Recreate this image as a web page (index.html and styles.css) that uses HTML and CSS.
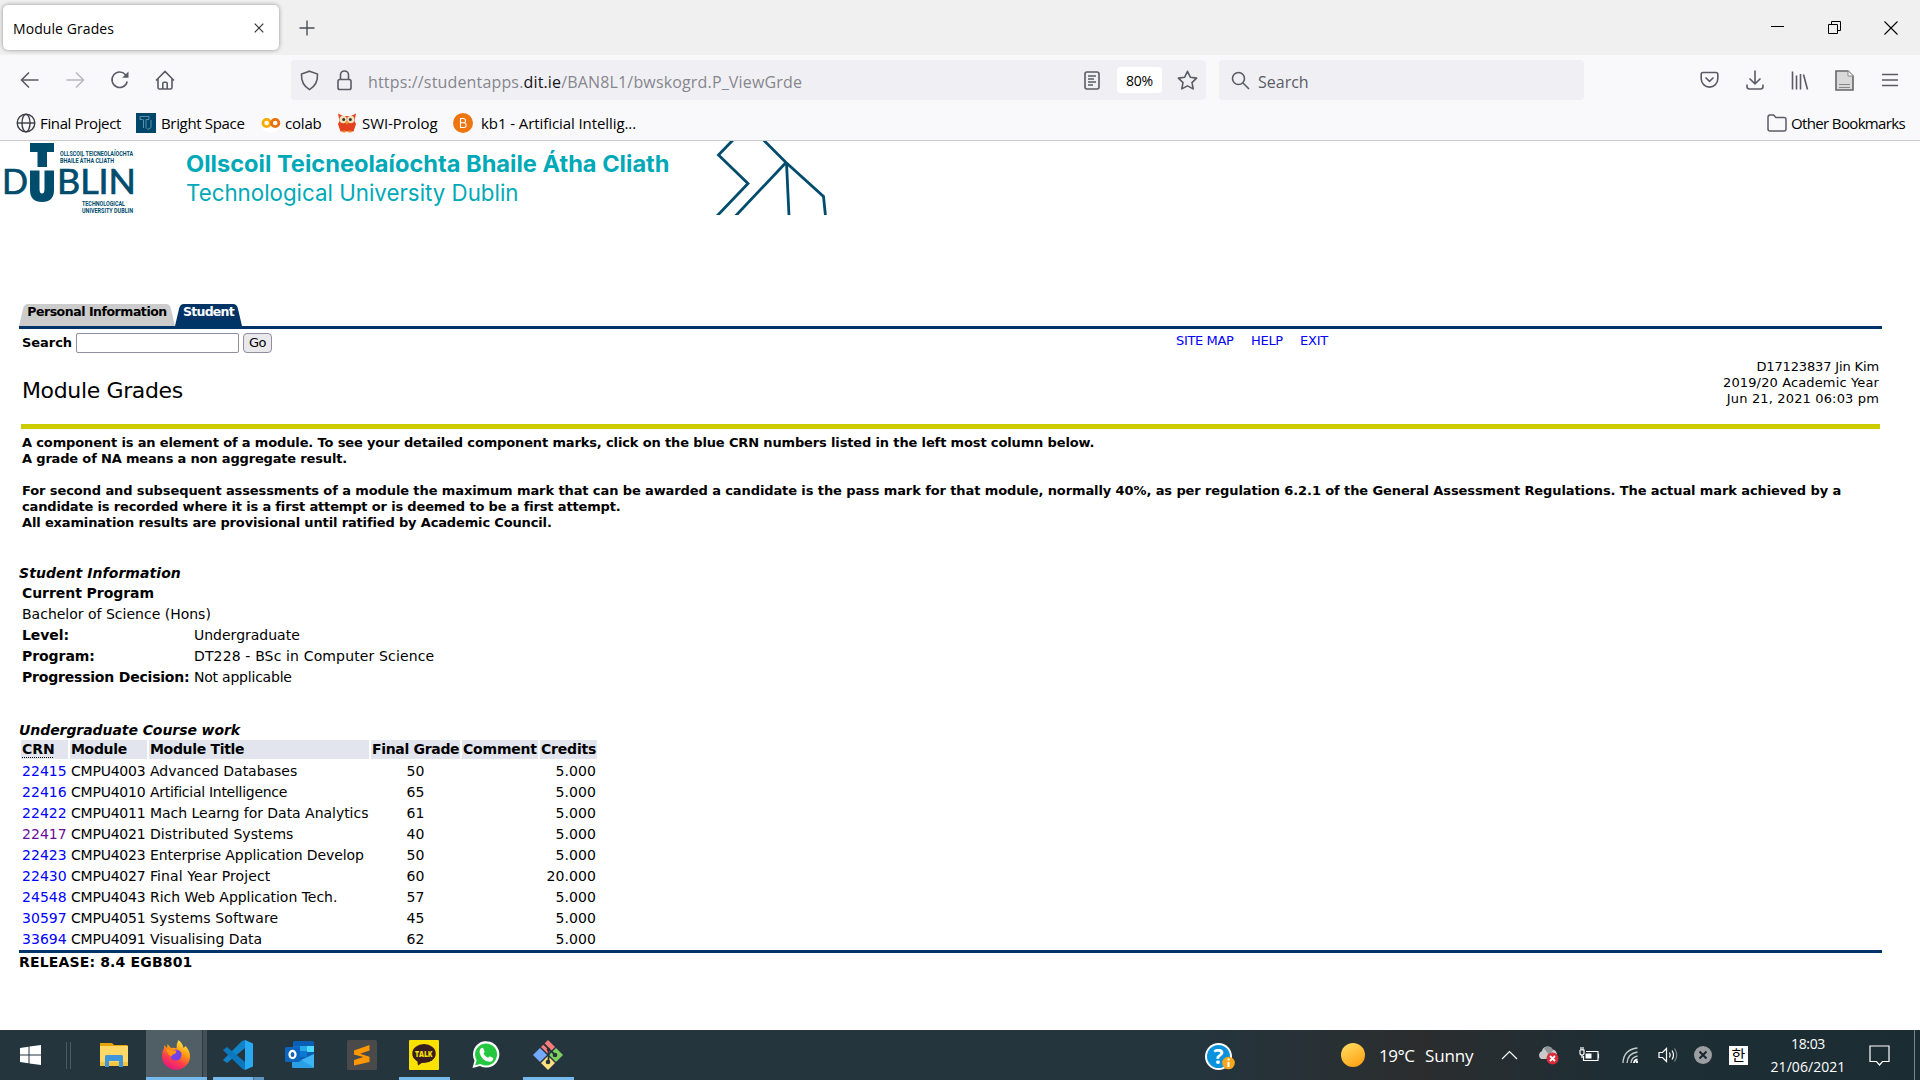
FILE: index.html
```html
<!DOCTYPE html>
<html lang="en">
<head>
<meta charset="utf-8">
<title>Module Grades</title>
<link rel="stylesheet" href="styles.css">
</head>
<body>
<div class="screen">
  <header class="tabstrip">
    <div class="browser-tab"><span class="t-tab">Module Grades</span>
      <svg width="10" height="10" viewBox="0 0 10 10" fill="none" stroke="#333" stroke-width="1.2"><path d="M.7.7l8.6 8.6M9.3.7L.7 9.3"/></svg>
    </div>
    <svg class="new-tab" width="16" height="16" viewBox="0 0 16 16" fill="none" stroke="#4b4b55" stroke-width="1.4"><path d="M8 .5v15M.5 8h15"/></svg>
    <div class="window-buttons">
      <span><svg width="13" height="13" viewBox="0 0 13 13"><path d="M0 5.5h13" stroke="#000"/></svg></span>
      <span><svg width="13" height="13" viewBox="0 0 13 13" fill="none" stroke="#000"><path d="M.5 3.5h9v9h-9zM3.5 3.5v-3h9v9h-3"/></svg></span>
      <span><svg width="14" height="14" viewBox="0 0 14 14" fill="none" stroke="#000" stroke-width="1.1"><path d="M.5.5l13 13M13.500.5l-13 13"/></svg></span>
    </div>
  </header>

  <nav class="toolbar">
    <div class="nav-buttons">
      <span><svg width="20" height="20" viewBox="0 0 20 20"><path d="M18.500 10H2M9 2.500L1.500 10 9 17.500"/></svg></span>
      <span class="off"><svg width="20" height="20" viewBox="0 0 20 20"><path d="M1.500 10H18M11 2.500l7.500 7.500-7.500 7.500"/></svg></span>
      <span><svg width="20" height="20" viewBox="0 0 20 20"><path d="M17.200 11.500A7.700 7.700 0 1 1 15.500 4.700L17 6.200"/><path d="M18.500 1.500v6.300h-6.300z" fill="#5b5b66" stroke="none"/></svg></span>
      <span><svg width="20" height="20" viewBox="0 0 20 20"><path d="M1 10.500L10 1.500l9 9M3 9v8.500q0 1.500 1.500 1.500h11q1.500 0 1.500-1.500V9M7.800 18.500v-5q0-1.300 1.200-1.300h2q1.200 0 1.200 1.300v5"/></svg></span>
    </div>
    <div class="url-bar">
      <svg width="19" height="21" viewBox="0 0 19 21"><path d="M9.500 1.200L17.500 4q.6 10.500-8 15.600Q.9 14.500 1.500 4z"/></svg>
      <svg class="lock" width="15" height="21" viewBox="0 0 15 21"><rect x="1" y="9.500" width="13" height="10" rx="1.800"/><path d="M3.500 9.500V5a4 4 0 0 1 8 0v4.500"/></svg>
      <span class="url t-url">https://studentapps.<b>dit.ie</b>/BAN8L1/bwskogrd.P_ViewGrde</span>
      <svg width="16" height="19" viewBox="0 0 16 19"><rect x="1" y="1" width="14" height="17" rx="2"/><path d="M4 5h8M4 8h6M4 11h8M4 14h5" stroke-width="1.300"/></svg>
      <span class="zoom-level">80%</span>
      <svg width="21" height="20" viewBox="0 0 21 20"><path d="M10.500 1.300l2.800 5.900 6.300.9-4.600 4.500 1.200 6.300-5.700-3-5.700 3L6 12.600 1.400 8.100l6.300-.9z" stroke-linejoin="round"/></svg>
    </div>
    <div class="search-bar">
      <svg width="19" height="19" viewBox="0 0 19 19"><circle cx="7.500" cy="7.500" r="6"/><path d="M12 12l6 6"/></svg>
      <span class="t-search">Search</span>
    </div>
    <div class="tool-buttons">
      <span><svg width="19" height="18" viewBox="0 0 19 18"><path d="M3 1.500h13q1.800 0 1.800 1.800v4.500a8.300 8.300 0 0 1-16.600 0V3.300Q1.200 1.500 3 1.500zM5.500 6.500l4 3.800 4-3.800"/></svg></span>
      <span><svg width="18" height="20" viewBox="0 0 18 20"><path d="M9 .5v13M3.500 8.500L9 13.800l5.500-5.300M1 14.500v2q0 2.500 2.500 2.500h11q2.500 0 2.500-2.500v-2"/></svg></span>
      <span><svg width="18" height="19" viewBox="0 0 18 19"><path d="M1.500.5v18M5.500 4.500v14M9.500 3v15.500M12.500 3.500l4 15"/></svg></span>
      <span><svg width="19" height="21" viewBox="0 0 19 21"><path d="M1 1h12l5 5v14H1z" fill="#d9d9d9" stroke="#666"/><path d="M13 1v5h5" fill="#fff" stroke="#888" stroke-width="1"/><path d="M4 14.500h11M4 17.500h11" stroke="#888" stroke-width="1.200"/></svg></span>
      <span><svg width="16" height="14" viewBox="0 0 16 14"><path d="M0 1.500h16M0 7h16M0 12.500h16"/></svg></span>
    </div>
  </nav>

  <nav class="bookmarks">
    <svg width="20" height="20" viewBox="0 0 20 20" fill="none" stroke="#3c3c44" stroke-width="1.400"><circle cx="10" cy="10" r="8.800"/><ellipse cx="10" cy="10" rx="4" ry="8.800"/><path d="M1.200 10h17.600"/></svg>
    <span class="bm-final">Final Project</span>
    <svg width="20" height="20" viewBox="0 0 20 20"><path fill="#00466b" d="M0 0h20v20H0z"/><path d="M4 3.500h9v3h-3v8l2 2 3-2V7M6.500 6.500H4v-3M7.500 6.500V15" fill="none" stroke="#5b91a8"/></svg>
    <span class="bm-bright">Bright Space</span>
    <svg width="20" height="20" viewBox="0 0 20 20"><circle cx="10" cy="10" r="10" fill="#fff"/><g fill="none" stroke-width="2.800"><circle cx="5.600" cy="10" r="3.700" stroke="#f9ab00"/><circle cx="14.200" cy="10" r="3.700" stroke="#e8710a"/></g></svg>
    <span class="bm-colab">colab</span>
    <svg width="20" height="20" viewBox="0 0 20 20"><path d="M1 .5l5 2.500h8L19 .5 17.500 8l1.500 3-2.500 7.500h-13L1 11l1.500-3z" fill="#e2401f"/><circle cx="6.200" cy="6.500" r="3.700" fill="#f3dfb8"/><circle cx="13.800" cy="6.500" r="3.700" fill="#f3dfb8"/><circle cx="6.700" cy="6.500" r="1.500" fill="#333"/><circle cx="13.300" cy="6.500" r="1.500" fill="#333"/><path d="M8.500 8.500h3L10 12z" fill="#f9a01b"/><path d="M5.500 17.500h3v2h-3zm6 0h3v2h-3z" fill="#e88a1a"/></svg>
    <span class="bm-swi">SWI-Prolog</span>
    <svg width="20" height="20" viewBox="0 0 20 20"><circle cx="10" cy="10" r="10" fill="#ee7611"/><path d="M7.500 5.500h3.300a2.200 2.200 0 0 1 0 4.300H7.500zM7.500 9.800h3.800a2.400 2.400 0 0 1 0 4.700H7.500z" fill="none" stroke="#fff" stroke-width="1.100"/></svg>
    <span class="bm-kb">kb1 - Artificial Intellig...</span>
    <svg class="folder" width="20" height="18" viewBox="0 0 20 18" fill="none" stroke="#5b5b66" stroke-width="1.500"><path d="M1 3.300Q1 1 3 1h3.500L9 3.500h8q2 0 2 2v9.500q0 2-2 2H3q-2 0-2-2z"/></svg>
    <span class="bm-other">Other Bookmarks</span>
  </nav>

  <main class="page">
    <div class="banner">
      <svg width="840" height="74" viewBox="0 0 840 74">
        <g fill="#004c6d" font-family="Lato, sans-serif">
          <path d="M30 2h24v9h-7v15h-9.500V11H30z"/>
          <g font-size="34" stroke="#004c6d" stroke-width=".7">
            <text x="2" y="52.500" textLength="26" lengthAdjust="spacingAndGlyphs">D</text>
            <text x="57" y="52.500" textLength="79" lengthAdjust="spacingAndGlyphs">BLIN</text>
          </g>
          <path d="M30 29.500h9.500V48q0 4.500 2.500 4.500T44.500 48V29.500H54V49q0 12-12 12T30 49z"/>
          <g font-size="7" font-family="Roboto, sans-serif" font-weight="700">
            <text x="60" y="14.500" textLength="73" lengthAdjust="spacingAndGlyphs">OLLSCOIL TEICNEOLAÍOCHTA</text>
            <text x="60" y="22" textLength="54" lengthAdjust="spacingAndGlyphs">BHAILE ÁTHA CLIATH</text>
            <text x="82" y="65" textLength="43" lengthAdjust="spacingAndGlyphs">TECHNOLOGICAL</text>
            <text x="82" y="72" textLength="51" lengthAdjust="spacingAndGlyphs">UNIVERSITY DUBLIN</text>
          </g>
        </g>
        <g fill="#00a9b7">
          <text x="186" y="31" font-size="23" font-weight="700" font-family="Inter, sans-serif" textLength="483.500" lengthAdjust="spacingAndGlyphs">Ollscoil Teicneolaíochta Bhaile Átha Cliath</text>
          <text x="186" y="60" font-size="22.500" font-family="Inter, sans-serif" textLength="332.500" lengthAdjust="spacingAndGlyphs">Technological University Dublin</text>
        </g>
        <path d="M733-1L718.500 14 748 42.500 717 75M763.500-1L786 21.500 823.500 55.500 825.500 75M786 21.500L735.500 75M786.500 21.500L789 75" fill="none" stroke="#004c6d" stroke-width="2.800"/>
      </svg>
    </div>

    <div class="page-tabs">
      <a class="page-tab personal"><span>Personal Information</span></a>
      <a class="page-tab student"><span>Student</span></a>
    </div>
    <div class="search-row">
      <b>Search</b>
      <input type="text">
      <button>Go</button>
      <div class="links"><a class="sitemap">SITE MAP</a><a class="help">HELP</a><a class="exit">EXIT</a></div>
    </div>
    <div class="title-row">
      <h1>Module Grades</h1>
      <div class="student-stamp">
        <span class="st-a">D17123837 Jin Kim</span>
        <span class="st-b">2019/20 Academic Year</span>
        <span class="st-c">Jun 21, 2021 06:03 pm</span>
      </div>
    </div>
    <div class="notice">
      <p class="n-first">A component is an element of a module. To see your detailed component marks, click on the blue CRN numbers listed in the left most column below.</p>
      <p class="n-grade">A grade of NA means a non aggregate result.</p>
      <p class="n-wide">For second and subsequent assessments of a module the maximum mark that can be awarded a candidate is the pass mark for that module, normally 40%, as per regulation 6.2.1 of the General Assessment Regulations. The actual mark achieved by a</p>
      <p class="n-cand">candidate is recorded where it is a first attempt or is deemed to be a first attempt.</p>
      <p>All examination results are provisional until ratified by Academic Council.</p>
    </div>

    <h2>Student Information</h2>
    <div class="info">
      <b>Current Program</b>
      <span class="full">Bachelor of Science (Hons)</span>
      <b>Level:</b><span>Undergraduate</span>
      <b>Program:</b><span class="i-prog">DT228 - BSc in Computer Science</span>
      <b class="i-dec">Progression Decision:</b><span class="i-na">Not applicable</span>
    </div>

    <h2 class="course">Undergraduate Course work</h2>
    <table>
      <colgroup><col class="c1"><col class="c2"><col class="c3"><col class="c4"><col class="c5"><col class="c6"></colgroup>
      <thead><tr><th><abbr>CRN</abbr></th><th>Module</th><th>Module Title</th><th>Final Grade</th><th class="th-com">Comment</th><th class="th-com">Credits</th></tr></thead>
      <tbody>
        <tr><td><a>22415</a></td><td>CMPU4003</td><td>Advanced Databases</td><td>50</td><td></td><td>5.000</td></tr>
        <tr><td><a>22416</a></td><td>CMPU4010</td><td class="tight">Artificial Intelligence</td><td>65</td><td></td><td>5.000</td></tr>
        <tr><td><a>22422</a></td><td>CMPU4011</td><td>Mach Learng for Data Analytics</td><td>61</td><td></td><td>5.000</td></tr>
        <tr><td><a class="visited">22417</a></td><td>CMPU4021</td><td class="loose">Distributed Systems</td><td>40</td><td></td><td>5.000</td></tr>
        <tr><td><a>22423</a></td><td>CMPU4023</td><td class="snug">Enterprise Application Develop</td><td>50</td><td></td><td>5.000</td></tr>
        <tr><td><a>22430</a></td><td>CMPU4027</td><td class="loose">Final Year Project</td><td>60</td><td></td><td>20.000</td></tr>
        <tr><td><a>24548</a></td><td>CMPU4043</td><td>Rich Web Application Tech.</td><td>57</td><td></td><td>5.000</td></tr>
        <tr><td><a>30597</a></td><td>CMPU4051</td><td class="looser">Systems Software</td><td>45</td><td></td><td>5.000</td></tr>
        <tr><td><a>33694</a></td><td>CMPU4091</td><td>Visualising Data</td><td>62</td><td></td><td>5.000</td></tr>
      </tbody>
    </table>
    <div class="release">RELEASE: 8.4 EGB801</div>
  </main>

  <footer class="taskbar">
    <div class="start"><svg width="21" height="20" viewBox="0 0 21 20" fill="#fff"><path d="M0 3l8.500-1.200v7.700H0zM9.500 1.600L21 0v9.500H9.500zM0 10.500h8.500v7.700L0 17zM9.500 10.500H21V20L9.500 18.400z"/></svg></div>
    <div class="grip"></div>
    <div class="apps">
      <span><svg width="30" height="30" viewBox="0 0 30 30"><path d="M1 3h12l2 2h13.500v2H1z" fill="#e5a50a"/><rect x="1" y="6" width="28" height="20" fill="#ffd868"/><path d="M1 22h28v4H1z" fill="#f5c342"/><path d="M6 27V16.500Q6 15 7.500 15h15q1.500 0 1.500 1.500V27h-4v-6H10v6z" fill="#3d96dc"/></svg></span>
      <span class="active"><svg width="30" height="30" viewBox="0 0 30 30"><defs><linearGradient id="fx" x1=".8" y1="0" x2=".3" y2="1"><stop offset="0" stop-color="#fff44f"/><stop offset=".4" stop-color="#ff980e"/><stop offset=".7" stop-color="#ff3b4f"/><stop offset="1" stop-color="#e31587"/></linearGradient></defs><path d="M17.500 0q4 3 5 8l2-2q4.500 4.500 4.500 10.500a14 13.200 0 0 1-28 0Q1 11 3 8V5l3 3 .5-4 3.500 4q3-.5 5.500.500Q15.500 3 17.500 0z" fill="url(#fx)"/><circle cx="15" cy="15" r="5.600" fill="#7542e5"/><path d="M5.500 9q5 1.500 10 1.500l-1 3q-3 .5-4.500 3-4-3-4.500-7.500z" fill="#ff980e"/></svg></span>
      <span class="open second"><svg width="30" height="30" viewBox="0 0 30 30"><path d="M22 0v8L4 23l-4-3L19 1z" fill="#1183c9"/><path d="M4 7L0 10l19 18.500 3 1.500v-8z" fill="#0b78bd"/><path d="M22 0l8 3.500v23L22 30z" fill="#29a9f2"/></svg></span>
      <span><svg width="30" height="30" viewBox="0 0 30 30"><rect x="8" y="1" width="21" height="27" rx="1.500" fill="#0a5fb5"/><path d="M8 6h7v7H8z" fill="#1070cb"/><path d="M15 6h7v5h-7z" fill="#28a8ea"/><path d="M22 6h7v6h-7z" fill="#50d9ff"/><path d="M15 11h7v6h-7z" fill="#0d78d0"/><path d="M7 16l10 5 12-7v13q0 1-1.500 1h-19Q7 28 7 27z" fill="#2b9fe4"/><path d="M29 14v13.500L16 20z" fill="#3fb4f4"/><rect y="7" width="15" height="15" rx="1.500" fill="#0b64bd"/><ellipse cx="7.500" cy="14.500" rx="3" ry="3.600" fill="none" stroke="#fff" stroke-width="2.200"/></svg></span>
      <span><svg width="30" height="30" viewBox="0 0 30 30"><rect width="30" height="30" rx="1.500" fill="#4a4a4a"/><path d="M7 10.500L22.500 5v5.500L13 13.800l9.500 3V22L7 25.500V20l9.500-3L7 14.500z" fill="#ff9800"/></svg></span>
      <span class="open"><svg width="30" height="30" viewBox="0 0 30 30"><rect width="30" height="30" rx="1" fill="#fae100"/><ellipse cx="15" cy="13.500" rx="11.700" ry="9.500" fill="#371d1e"/><path d="M8 19l1 6.500 6-4z" fill="#371d1e"/><text x="6" y="17.300" font-family="Open Sans, sans-serif" font-weight="800" font-size="8.500" fill="#fae100" textLength="17.500" lengthAdjust="spacingAndGlyphs">TALK</text></svg></span>
      <span><svg width="30" height="30" viewBox="0 0 30 30"><path d="M1.500 28l2-7.500A13.200 13.200 0 1 1 9 26z" fill="#fff"/><path d="M4.200 25.300l1.500-5A11 11 0 1 1 9.500 24z" fill="#25c640"/><path d="M10 8.200l2-.5 1.700 4-1.200 2q1.500 2.800 4.500 4l1.700-1.500 3.600 1.800q0 3.500-3.600 3.800Q10.500 21 8.500 12.200 8.500 9.500 10 8.200z" fill="#fff"/></svg></span>
      <span class="open"><svg width="30" height="30" viewBox="0 0 30 30"><path d="M15 0l7 7-7 7-7-7z" fill="#ff7b7b"/><path d="M23 8l7 7-7 7-7-7z" fill="#80d060"/><path d="M7 8l7 7-7 7-7-7z" fill="#75a9ff"/><path d="M15 16l7 7-7 7-7-7z" fill="#ffe07b"/><path d="M10.500 3.500l5 5V23M15.500 9l7 6" fill="none" stroke="#24343c" stroke-width="1.800"/><circle cx="15" cy="22" r="2.300" fill="#24343c"/><circle cx="22" cy="15" r="2.300" fill="#24343c"/><circle cx="15.500" cy="9.500" r="1.800" fill="#24343c"/></svg></span>
    </div>
    <div class="help-tray"><svg width="30" height="28" viewBox="0 0 30 28"><ellipse cx="13.500" cy="13.500" rx="13.500" ry="13.500" fill="#fff"/><circle cx="13.500" cy="13.500" r="11.500" fill="#0a93dc"/><text x="13.500" y="21" text-anchor="middle" font-family="Open Sans, sans-serif" font-weight="700" font-size="21" fill="#fff">?</text><circle cx="23.500" cy="20" r="6.300" fill="#f5a81c"/><path d="M23.500 15.500v2M23.500 19v5" stroke="#fff" stroke-width="2"/></svg></div>
    <div class="weather"><i class="sun"></i><span class="w-temp">19°C</span><span class="w-sky">Sunny</span></div>
    <div class="tray">
      <span class="chev"><svg width="17" height="10" viewBox="0 0 17 10"><path d="M1 9L8.500 1.500 16 9"/></svg></span>
      <span class="cloud"><svg width="21" height="20" viewBox="0 0 21 20"><g stroke="none"><path d="M3 14a4.500 4.500 0 0 1 1-8 5 5 0 0 1 9.500-1.500A5 5 0 0 1 16 14z" fill="#c9c9c9"/><path d="M6 3.500a5 5 0 0 1 9 2l-4 4z" fill="#8f9496"/><circle cx="14.500" cy="13.500" r="6" fill="#d92c3a"/></g><path d="M12 11l5 5M17 11l-5 5" stroke-width="1.800"/></svg></span>
      <span class="batt"><svg width="21" height="17" viewBox="0 0 21 17"><path d="M7 4.500h12v9H4.500V9M19.500 7v4M1 3v3q0 2 2 2t2-2V3H1M2 3V0M4 3V0M3 8v3"/><path d="M6.500 6.500h6v5h-6z" fill="#fff" stroke="none"/></svg></span>
      <span class="wifi"><svg width="17" height="17" viewBox="0 0 17 17"><path d="M1 16Q1.500 2.500 15.500 1M5 16q.5-9.500 10.500-11M9 16q.5-6 6.500-7" stroke="#c4cbce" stroke-width="1.300"/><path d="M12 16q.3-3 3.500-3.500M14 15h2" stroke-width="2"/></svg></span>
      <span class="vol"><svg width="21" height="16" viewBox="0 0 21 16"><path d="M1 5.500h3.500l4-4v13l-4-4H1zM11.500 5.500q1.500 2.500 0 5M14 3.500q3 4.500 0 9"/><path d="M16.500 1.500q4.500 6.500 0 13" stroke="#7d878b"/></svg></span>
      <span class="xdot"><svg width="18" height="18" viewBox="0 0 18 18"><circle cx="9" cy="9" r="9" fill="#9b9fa1" stroke="none"/><path d="M5.500 5.500l7 7M12.500 5.500l-7 7" stroke="#17252c" stroke-width="2"/></svg></span>
      <span class="ime">한</span>
    </div>
    <div class="clock"><span class="c-time">18:03</span><span>21/06/2021</span></div>
    <svg class="note" width="21" height="21" viewBox="0 0 21 21" fill="none" stroke="#fff" stroke-width="1.200"><path d="M1 1h19v15.500h-6.500L10.500 20l-3-3.500H1z"/></svg>
    <div class="peek"></div>
  </footer>
</div>
</body>
</html>
```
FILE: styles.css
```css
* { box-sizing: border-box; }
body { margin: 0; }
.screen {
  display: flex; flex-direction: column;
  width: 1920px; height: 1080px; overflow: hidden;
  background: #fff; color: #000;
  font-family: "Open Sans", "Noto Sans", sans-serif;
  white-space: nowrap;
}
svg { display: block; flex: none; }

/* browser chrome */
.tabstrip { flex: none; height: 55px; background: #f0f0f0; display: flex; align-items: center; padding-left: 3px; }
.browser-tab {
  width: 276px; height: 45px; padding: 0 15px 0 10px;
  display: flex; align-items: center; justify-content: space-between;
  background: #fff; border-radius: 5px; box-shadow: 0 0 4px rgba(0,0,0,.4);
}
.t-tab { font-size: 14px; letter-spacing: .08px; padding-top: 2px; }
.new-tab { margin-left: 20px; }
.window-buttons { margin-left: auto; display: flex; padding-right: 1px; }
.window-buttons span { width: 56.500px; display: flex; justify-content: center; align-items: center; }

.toolbar { flex: none; height: 50px; background: #f9f9fb; display: flex; align-items: center; }
.toolbar svg { fill: none; stroke: #5b5b66; stroke-width: 1.600; }
.nav-buttons { display: flex; width: 291px; padding-left: 7px; }
.nav-buttons span { width: 45px; display: flex; justify-content: center; }
.nav-buttons .off { opacity: .4; }
.url-bar {
  width: 915px; height: 40px; border-radius: 4px; background: #f0f0f4;
  display: flex; align-items: center; padding: 0 8px 0 9px;
}
.lock { margin: 0 16px 0 18px; }
.url { flex: 1; color: #86868e; padding-top: 4px; }
.url b { font-weight: 400; color: #15141a; }
.t-url { font-size: 16px; letter-spacing: .16px; }
.zoom-level {
  width: 45px; height: 26px; margin: 0 15px 0 17px; border-radius: 4px; background: #fff;
  font-size: 14px; letter-spacing: -.2px; line-height: 27px; text-align: center;
}
.search-bar {
  width: 365px; height: 40px; margin-left: 13px; border-radius: 4px; background: #f0f0f4;
  display: flex; align-items: center; gap: 8px; padding-left: 12px;
}
.t-search { font-size: 16px; color: #5b5b66; padding-top: 4px; }
.tool-buttons { display: flex; margin-left: 103px; }
.tool-buttons span { width: 45px; display: flex; justify-content: center; align-items: center; }

.bookmarks {
  flex: none; height: 36px; background: #f9f9fb; border-bottom: 1px solid #ccc;
  display: flex; align-items: center; padding: 0 15px 0 16px; font-size: 15px;
}
.bookmarks span { padding-left: 4px; padding-top: 1px; }
.bm-final { letter-spacing: -.36px; width: 100px; }
.bm-bright { letter-spacing: -.34px; width: 104px; }
.bm-bright, .bm-swi { margin-left: 1px; }
.bm-colab { letter-spacing: -.2px; width: 56px; }
.bm-swi { letter-spacing: -.07px; width: 95px; }
.bookmarks .bm-kb { letter-spacing: -.08px; padding-left: 8px; }
.folder { margin-left: auto; }
.bookmarks .bm-other { letter-spacing: -.65px; }

/* page */
.page { flex: 1; padding: 0 38px 0 19px; font: 14px/19px "DejaVu Sans", Verdana, sans-serif; }
.banner { height: 163px; margin-left: -19px; }
.page-tabs { display: flex; height: 25px; border-bottom: 3px solid #003366; }
.page-tab { height: 22px; text-align: center; font: bold 12.500px/15px "DejaVu Sans", sans-serif; }
.personal { width: 156px; background: #ccc; letter-spacing: -.46px; clip-path: path("M0 22L4 5Q5 0 9 0H147Q151 0 152 5L156 22z"); }
.student { width: 67px; background: #003366; color: #fff; letter-spacing: -.75px; clip-path: path("M0 22L4 5Q5 0 9 0H58Q62 0 63 5L67 22z"); }

.search-row { display: flex; align-items: center; height: 27px; padding-left: 3px; font-size: 13px; }
.search-row b { letter-spacing: -.05px; width: 54px; }
.search-row input { width: 163px; height: 20px; border: 1px solid #8f8f9d; border-radius: 2px; padding: 0; }
.search-row button {
  width: 29px; height: 20px; margin-left: 4px; padding: 0; border: 1px solid #8f8f9d; border-radius: 4px;
  background: #e9e9ed; color: #000; font: 13px/17px "DejaVu Sans", sans-serif; letter-spacing: -.5px;
}
.links { display: flex; margin-left: 904px; padding-bottom: 4px; color: #00f; }
.sitemap { width: 75px; letter-spacing: -.35px; }
.help { width: 49px; letter-spacing: -.3px; }
.exit { letter-spacing: -.23px; }

.title-row {
  display: flex; justify-content: space-between; height: 73px; margin: 0 2px;
  border-bottom: 5px solid #cccc00;
}
h1 { margin: 20px 0 0 1px; font: 22px/30px "DejaVu Sans", sans-serif; letter-spacing: -.36px; }
.student-stamp { display: flex; flex-direction: column; align-items: flex-end; font-size: 13px; line-height: 16px; padding: 3px 1px 0 0; }
.st-a { letter-spacing: -.14px; }
.st-b { letter-spacing: .13px; }
.st-c { letter-spacing: .15px; }

.notice { height: 125px; padding: 6px 0 0 3px; font-weight: bold; font-size: 13px; line-height: 16px; letter-spacing: -.148px; }
.notice p { margin: 0; }
.notice .n-first { letter-spacing: -.14px; }
.notice .n-cand { letter-spacing: -.16px; }
.notice .n-grade { margin-bottom: 16px; letter-spacing: -.17px; }
.notice .n-wide { letter-spacing: -.102px; }

h2 { margin: 10px 0 0; font: italic bold 14px/19px "DejaVu Sans", sans-serif; letter-spacing: .06px; }
.info { display: grid; grid-template-columns: 172px max-content; grid-auto-rows: 21px; line-height: 21px; padding: 0 0 0 3px; }
.info b:first-child, .info .full { grid-column: 1 / 3; }
.info b { letter-spacing: -.06px; }
.info .i-prog { letter-spacing: .14px; }
.info .i-dec { letter-spacing: -.2px; }
.info .i-na { letter-spacing: -.22px; }
h2.course { margin-top: 33px; letter-spacing: -.07px; }

table { table-layout: fixed; width: 580px; border-spacing: 2px; margin: -2px 0 0; }
.c1 { width: 47px; } .c2 { width: 77px; } .c3 { width: 220px; } .c4 { width: 89px; } .c5 { width: 76px; } .c6 { width: 57px; }
th, td { height: 19px; padding: 0 1px; text-align: left; line-height: 19px; }
th { background: #e3e5ee; letter-spacing: -.32px; }
td { padding-top: 1px; line-height: 18px; }
th abbr { letter-spacing: 0; text-decoration: underline dotted 1px; text-underline-offset: 3px; }
th.th-com { letter-spacing: -.2px; }
td { letter-spacing: -.03px; }
td:nth-child(1) { letter-spacing: .05px; }
td:nth-child(2) { letter-spacing: -.22px; }
td:nth-child(4) { text-align: center; }
td:nth-child(6) { text-align: right; letter-spacing: .08px; }
td.tight { letter-spacing: -.28px; }
td.snug { letter-spacing: -.1px; }
td.loose { letter-spacing: .09px; }
td.looser { letter-spacing: .17px; }
td a { color: #00f; }
td a.visited { color: #6a0d9a; }
.release { border-top: 3px solid #003366; font-weight: bold; letter-spacing: .16px; }

/* taskbar */
.taskbar { flex: none; height: 50px; background: linear-gradient(90deg, #24353e 0, #24353e 62%, #2b2d2e 74%, #1e2e35 84%, #1c2c33); display: flex; align-items: center; color: #fff; }
.start { width: 60px; padding-left: 20px; }
.grip { width: 5px; height: 27px; margin-left: 6px; border: solid #4d5b62; border-width: 0 1px; }
.apps { display: flex; height: 50px; margin-left: 12px; }
.apps span { width: 62px; display: flex; justify-content: center; padding-top: 10px; background: bottom / 51px 3px no-repeat; }
.apps .active { background: linear-gradient(#76b9ed, #76b9ed) 1px bottom / 61px 3px no-repeat, linear-gradient(90deg, transparent 1px, #505e66 1px 57px, #2b393f 57px 58px, #445158 58px); }
.apps .open { background-image: linear-gradient(#76b9ed, #76b9ed); }
.apps .second { background-image: linear-gradient(90deg, #76b9ed 40px, #456f90 40px 41px, #5c93bf 41px); }
.help-tray { margin-left: 626px; padding-top: 3px; }
.weather { display: flex; align-items: center; font-size: 17px; margin-left: 106px; }
.sun { width: 24px; height: 24px; border-radius: 50%; background: linear-gradient(150deg, #ffe066, #ff9a0a); }
.w-temp { margin-left: 14px; width: 46px; letter-spacing: -.48px; }
.w-sky { letter-spacing: -.12px; width: 76px; }
.tray { display: flex; align-items: center; }
.tray svg { fill: none; stroke: #fff; stroke-width: 1.200; }
.chev { width: 37px; }
.cloud { width: 41px; }
.batt { width: 43px; }
.wifi { width: 36px; }
.vol { width: 36px; }
.xdot { width: 35px; }
.ime { width: 19px; height: 19px; background: #fff; color: #000; font: 15px/18px "Noto Sans CJK KR", sans-serif; text-align: center; }
.clock { width: 76px; margin-left: 22px; text-align: center; font-size: 14px; line-height: 23px; letter-spacing: .06px; display: flex; flex-direction: column; }
.c-time { letter-spacing: -.34px; }
.note { margin-left: 23px; }
.peek { width: 1px; height: 50px; margin-left: 24px; background: #78858a; }
```
